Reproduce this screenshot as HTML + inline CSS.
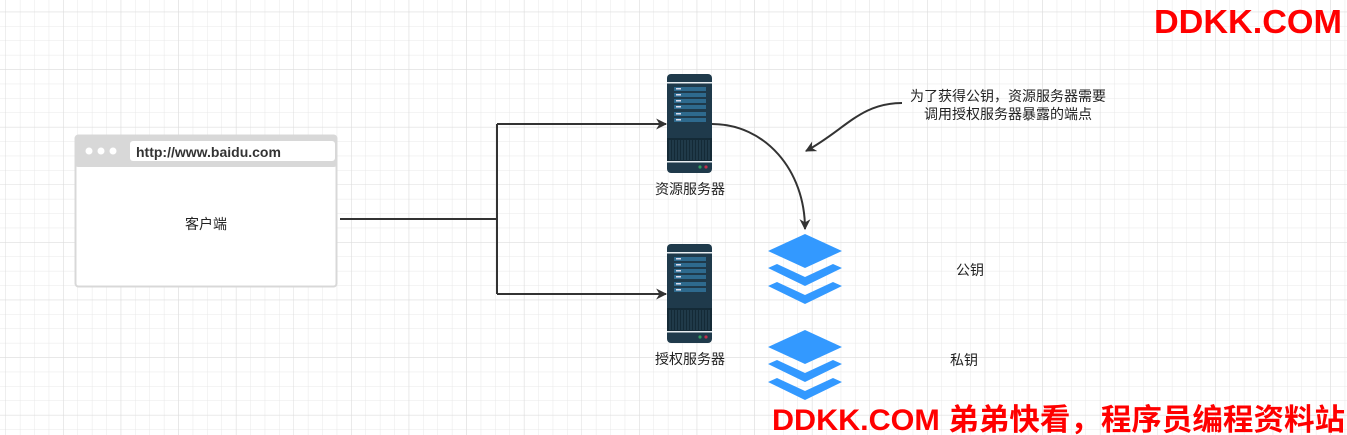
<!DOCTYPE html>
<html><head><meta charset="utf-8"><style>
body{margin:0;width:1347px;height:435px;overflow:hidden;background:#fff;font-family:"Liberation Sans","Noto Sans CJK SC",sans-serif}
svg{position:absolute;left:0;top:0}
</style></head><body>
<svg width="1347" height="435" xmlns="http://www.w3.org/2000/svg">
<defs>
<pattern id="g" x="5.5" y="11.7" width="14.4" height="14.4" patternUnits="userSpaceOnUse">
<path d="M0 0H14.4M0 0V14.4" stroke="#e8e8e8" stroke-width="1" fill="none"/></pattern>
<pattern id="G" x="5.5" y="11.7" width="57.6" height="57.6" patternUnits="userSpaceOnUse">
<path d="M0 0H57.6M0 0V57.6" stroke="#dcdcdc" stroke-width="1" fill="none"/></pattern>
<g id="srv">
<rect x="0" y="0" width="45" height="99" rx="4" fill="#1f3a4b"/>
<rect x="0" y="8" width="45" height="1.5" fill="#e8eef2"/>
<rect x="7" y="13" width="32" height="4" fill="#2e6a8e"/><rect x="9" y="14" width="5" height="1.5" fill="#dde"/>
<rect x="7" y="19" width="32" height="4" fill="#2e6a8e"/><rect x="9" y="20" width="5" height="1.5" fill="#dde"/>
<rect x="7" y="25" width="32" height="4" fill="#2e6a8e"/><rect x="9" y="26" width="5" height="1.5" fill="#dde"/>
<rect x="7" y="31" width="32" height="4" fill="#2e6a8e"/><rect x="9" y="32" width="5" height="1.5" fill="#dde"/>
<rect x="7" y="38" width="32" height="4" fill="#2e6a8e"/><rect x="9" y="39" width="5" height="1.5" fill="#dde"/>
<rect x="7" y="44" width="32" height="4" fill="#2e6a8e"/><rect x="9" y="45" width="5" height="1.5" fill="#dde"/>
<rect x="0" y="64" width="45" height="23" fill="#142a36"/>
<path d="M3 66V86M6 66V86M9 66V86M12 66V86M15 66V86M18 66V86M21 66V86M24 66V86M27 66V86M30 66V86M33 66V86M36 66V86M39 66V86M42 66V86" stroke="#2b4a5c" stroke-width="1"/>
<rect x="0" y="87" width="45" height="1.5" fill="#e8eef2"/>
<circle cx="33" cy="93" r="1.6" fill="#2e9a5e"/><circle cx="39" cy="93" r="1.6" fill="#c0304a"/>
</g>
<g id="lay" fill="#3399ff">
<polygon points="768,251 805,234 842,251 805,268"/>
<polygon points="768,268 777,264 805,277 833,264 842,268 805,286"/>
<polygon points="768,286 777,282 805,295 833,282 842,286 805,304"/>
</g>
<marker id="ar" viewBox="0 0 10 10" refX="9" refY="5" markerWidth="13" markerHeight="11" orient="auto" markerUnits="userSpaceOnUse"><path d="M0 0L10 5L0 10L3 5z" fill="#333"/></marker>
</defs>
<rect width="1347" height="435" fill="url(#g)"/>
<rect width="1347" height="435" fill="url(#G)"/>
<rect x="75.5" y="135.5" width="261" height="151" rx="3" fill="#fff" stroke="#d8d8d8" stroke-width="2"/>
<rect x="75" y="135" width="262" height="32" rx="3" fill="#d8d8d8"/>
<circle cx="89" cy="151" r="3.5" fill="#fff"/><circle cx="101" cy="151" r="3.5" fill="#fff"/><circle cx="113" cy="151" r="3.5" fill="#fff"/>
<rect x="130" y="141" width="205" height="20" rx="3" fill="#fff"/>
<text x="136" y="157" font-size="14" font-weight="bold" fill="#333" font-family="Liberation Sans,sans-serif">http://www.baidu.com</text>
<text x="206" y="229" font-size="14" fill="#222" text-anchor="middle">客户端</text>
<path d="M340 219H497M497 124V294" stroke="#333" stroke-width="2" fill="none"/>
<path d="M497 124H666" stroke="#333" stroke-width="2" fill="none" marker-end="url(#ar)"/>
<path d="M497 294H666" stroke="#333" stroke-width="2" fill="none" marker-end="url(#ar)"/>
<path d="M712 124C765 124 805 170 805 229" stroke="#333" stroke-width="2" fill="none" marker-end="url(#ar)"/>
<path d="M902 103C860 103 845 130 806 151" stroke="#333" stroke-width="2" fill="none" marker-end="url(#ar)"/>
<use href="#srv" x="667" y="74"/>
<use href="#srv" x="667" y="244"/>
<text x="690" y="194" font-size="14" fill="#222" text-anchor="middle">资源服务器</text>
<text x="690" y="364" font-size="14" fill="#222" text-anchor="middle">授权服务器</text>
<use href="#lay"/>
<use href="#lay" y="96"/>
<text x="970" y="275" font-size="14" fill="#222" text-anchor="middle">公钥</text>
<text x="964" y="365" font-size="14" fill="#222" text-anchor="middle">私钥</text>
<text x="1008" y="101" font-size="14" fill="#222" text-anchor="middle">为了获得公钥，资源服务器需要</text>
<text x="1008" y="119" font-size="14" fill="#222" text-anchor="middle">调用授权服务器暴露的端点</text>
<text x="1342" y="33" font-size="33" font-weight="bold" fill="#ff0000" text-anchor="end" textLength="188" lengthAdjust="spacingAndGlyphs">DDKK.COM</text>
<text x="772" y="430" font-size="30" font-weight="bold" fill="#ff0000" textLength="573" lengthAdjust="spacingAndGlyphs">DDKK.COM 弟弟快看，程序员编程资料站</text>
</svg>
</body></html>
